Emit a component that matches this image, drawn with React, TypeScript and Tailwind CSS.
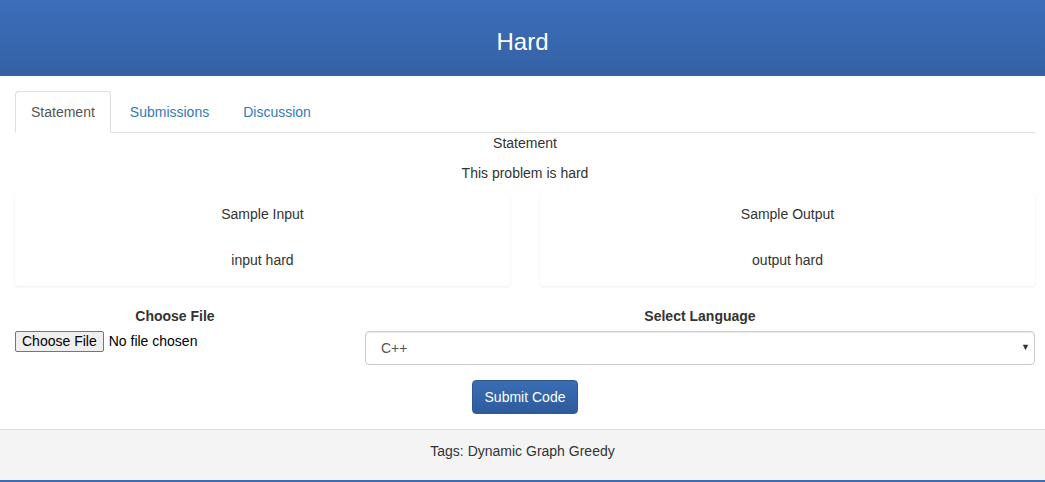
export default function App() {
  const tabs = ["Statement", "Submissions", "Discussion"];
  const samples = [
    { title: "Sample Input", body: "input hard" },
    { title: "Sample Output", body: "output hard" },
  ];

  return (
    <div className="min-h-[482px] bg-white text-[14px] text-[#333] font-['Liberation_Sans',Arial,sans-serif]">
      <header className="h-[76px] flex items-center justify-center bg-gradient-to-b from-[#3b6fba] to-[#3461a5]">
        <h1 className="text-[24px] text-white pt-[8px]">Hard</h1>
      </header>

      <div className="pl-[15px] pr-[10px] pt-[15px]">
        <ul className="flex border-b border-[#ddd] h-[42px]">
          {tabs.map((tab, i) => (
            <li
              key={tab}
              className={
                i === 0
                  ? "px-[15px] pt-[10px] border border-[#ddd] border-b-white rounded-t-[4px] bg-white -mb-px text-[#555]"
                  : "px-[15px] pt-[11px] ml-[4px] text-[#337ab7]"
              }
            >
              {tab}
            </li>
          ))}
        </ul>

        <div className="text-center">
          <p className="leading-[20px]">Statement</p>
          <p className="leading-[20px] mt-[10px]">This problem is hard</p>
        </div>

        <div className="grid grid-cols-2 gap-[30px] mt-[10px]">
          {samples.map((s) => (
            <div
              key={s.title}
              className="h-[93px] rounded-[4px] bg-white shadow-[0_1px_3px_rgba(0,0,0,0.08)] text-center pt-[11px]"
            >
              <p className="leading-[20px]">{s.title}</p>
              <p className="leading-[20px] mt-[26px]">{s.body}</p>
            </div>
          ))}
        </div>

        <div className="grid grid-cols-[320px_1fr] gap-[30px] mt-[20px]">
          <div>
            <p className="text-center font-bold leading-[20px]">Choose File</p>
            <div className="flex items-center mt-[5px] text-[14px] text-black font-['Liberation_Sans',Arial,sans-serif]">
              <span className="px-[6px] h-[21px] leading-[19px] border border-[#767676] rounded-[2px] bg-[#efefef]">
                Choose File
              </span>
              <span className="ml-[5px]">No file chosen</span>
            </div>
          </div>
          <div>
            <p className="text-center font-bold leading-[20px]">Select Language</p>
            <div className="mt-[5px] h-[34px] border border-[#ccc] rounded-[4px] shadow-[inset_0_1px_1px_rgba(0,0,0,0.075)] flex items-center justify-between pl-[15px] pr-[4px] text-[#555]">
              <span>C++</span>
              <span className="text-[9px] text-[#333]">▼</span>
            </div>
          </div>
        </div>

        <div className="flex justify-center mt-[15px]">
          <button className="h-[34px] px-[12px] rounded-[4px] border border-[#2e5a94] bg-gradient-to-b from-[#3b6db5] to-[#2d5b9c] text-white">
            Submit Code
          </button>
        </div>
      </div>

      <footer className="mt-[15px] h-[53px] bg-[#f4f4f4] border-t border-[#ddd] border-b-2 border-b-[#3a6db8] text-center pt-[11px]">
        Tags: Dynamic Graph Greedy
      </footer>
    </div>
  );
}
